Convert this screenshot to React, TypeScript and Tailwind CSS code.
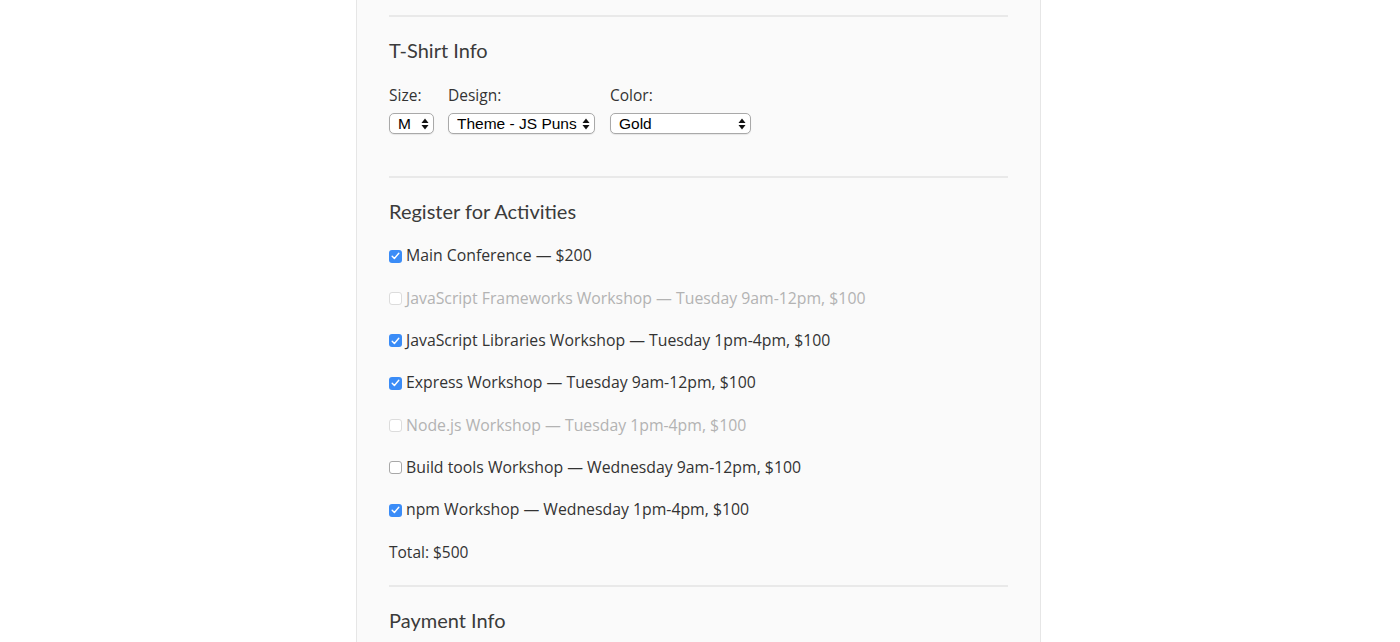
import React, { useState } from "react";

type Activity = {
  name: string;
  checked: boolean;
  disabled: boolean;
};

const actividades: Activity[] = [
  { name: "Main Conference — $200", checked: true, disabled: false },
  { name: "JavaScript Frameworks Workshop — Tuesday 9am-12pm, $100", checked: false, disabled: true },
  { name: "JavaScript Libraries Workshop — Tuesday 1pm-4pm, $100", checked: true, disabled: false },
  { name: "Express Workshop — Tuesday 9am-12pm, $100", checked: true, disabled: false },
  { name: "Node.js Workshop — Tuesday 1pm-4pm, $100", checked: false, disabled: true },
  { name: "Build tools Workshop — Wednesday 9am-12pm, $100", checked: false, disabled: false },
  { name: "npm Workshop — Wednesday 1pm-4pm, $100", checked: true, disabled: false },
];

const Flechas: React.FC = () => (
  <svg width="8" height="12" viewBox="0 0 8 12" className="pointer-events-none absolute right-[5px] top-1/2 -translate-y-1/2">
    <path d="M4 0.5 L7.5 5 L0.5 5 Z" fill="#111" />
    <path d="M4 11.5 L7.5 7 L0.5 7 Z" fill="#111" />
  </svg>
);

const Selector: React.FC<{ value: string; options: string[]; width: string }> = ({ value, options, width }) => {
  const [valor, setValor] = useState(value);
  return (
    <div className={`relative ${width}`}>
      <select
        value={valor}
        onChange={(e) => setValor(e.target.value)}
        className="block appearance-none w-full h-[21px] pl-[8px] pr-[14px] bg-white border border-[#a9a9a9] rounded-[5px] text-[15.5px] leading-[19px] text-black font-['Liberation_Sans',sans-serif] shadow-[0_1px_1px_rgba(0,0,0,0.08)] focus:outline-none"
      >
        {options.map((o) => (
          <option key={o}>{o}</option>
        ))}
      </select>
      <Flechas />
    </div>
  );
};

const Casilla: React.FC<{ checked: boolean; disabled: boolean }> = ({ checked, disabled }) => {
  if (checked) {
    return (
      <span className="w-[13px] h-[13px] rounded-[3px] bg-[#3a8cf7] flex items-center justify-center shrink-0">
        <svg width="9" height="8" viewBox="0 0 9 8">
          <path d="M1.2 4.2 L3.4 6.5 L7.8 1.2" stroke="white" strokeWidth="1.4" fill="none" strokeLinecap="round" strokeLinejoin="round" />
        </svg>
      </span>
    );
  }
  return (
    <span
      className={`w-[13px] h-[13px] rounded-[3px] bg-white border shrink-0 ${
        disabled ? "border-[#dcdcdc]" : "border-[#a8a8a8]"
      }`}
    />
  );
};

const App: React.FC = () => {
  return (
    <div className="min-h-screen bg-white font-['Lato',sans-serif] text-[#3a3a3a] flex justify-center pr-[3px]">
      <div className="w-[685px] min-h-[642px] bg-[#fafafa] border-x border-[#e6e6e6] px-[32px] pt-[15px]">
        <div className="h-[2px] bg-[#e9e9e9]" />

        <h2 className="mt-[21px] text-[20px] leading-[24px] text-[#3b3b3b]">T-Shirt Info</h2>

        <div className="mt-[23px] flex gap-[14px] text-[#333] font-['Open_Sans',sans-serif]">
          <div className="flex flex-col">
            <label className="text-[15.5px] leading-[20px] h-[20px]">Size:</label>
            <div className="mt-[8px]">
              <Selector value="M" options={["S", "M", "L", "XL"]} width="w-[45px]" />
            </div>
          </div>
          <div className="flex flex-col">
            <label className="text-[15.5px] leading-[20px] h-[20px]">Design:</label>
            <div className="mt-[8px]">
              <Selector value="Theme - JS Puns" options={["Theme - JS Puns", "Theme - I ♥ JS"]} width="w-[147px]" />
            </div>
          </div>
          <div className="flex flex-col ml-[1px]">
            <label className="text-[15.5px] leading-[20px] h-[20px]">Color:</label>
            <div className="mt-[8px]">
              <Selector value="Gold" options={["Cornflower Blue", "Dark Slate Grey", "Gold"]} width="w-[141px]" />
            </div>
          </div>
        </div>

        <div className="mt-[42px] h-[2px] bg-[#e9e9e9]" />

        <h2 className="mt-[21px] text-[20px] leading-[24px] text-[#3b3b3b]">Register for Activities</h2>

        <div className="mt-[12px] flex flex-col font-['Open_Sans',sans-serif]">
          {actividades.map((a) => (
            <label
              key={a.name}
              className={`h-[42.33px] flex items-center gap-[4px] text-[15.8px] ${
                a.disabled ? "text-[#b3b3b3]" : "text-[#333]"
              }`}
            >
              <Casilla checked={a.checked} disabled={a.disabled} />
              <span>{a.name}</span>
            </label>
          ))}
          <div className="h-[42.33px] flex items-center text-[15.5px] text-[#333]">Total: $500</div>
        </div>

        <div className="mt-[11px] h-[2px] bg-[#e9e9e9]" />

        <h2 className="mt-[21px] text-[20px] leading-[24px] text-[#3b3b3b]">Payment Info</h2>
      </div>
    </div>
  );
};

export default App;
